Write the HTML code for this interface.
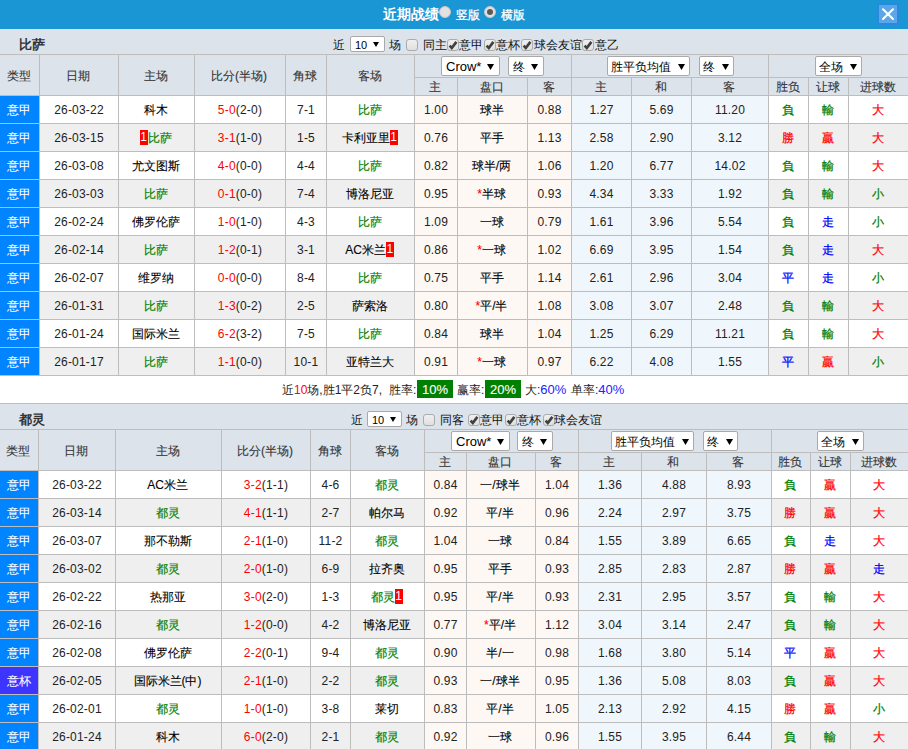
<!DOCTYPE html><html><head><meta charset="utf-8"><style>
html,body{margin:0;padding:0;}
body{width:908px;height:749px;overflow:hidden;position:relative;background:#fff;font-family:"Liberation Sans",sans-serif;font-size:12px;color:#222;}
.t{position:absolute;white-space:nowrap;}
.c{position:absolute;white-space:nowrap;text-align:center;overflow:visible;}
.c{-webkit-text-stroke:0.1px;}
.n{letter-spacing:0.2px;-webkit-text-stroke:0;color:#222;}
.rc{display:inline-block;background:#f00;color:#fff;width:8px;height:15px;line-height:15px;text-align:center;vertical-align:middle;font-size:12px;position:relative;top:-1px;-webkit-text-stroke:0;}
.sel{position:absolute;background:#fff;border:1px solid #a9a9a9;border-radius:2px;box-sizing:border-box;}
.cb{position:absolute;width:12px;height:12px;box-sizing:border-box;border:1px solid #ababab;border-radius:3px;background:linear-gradient(#efefef,#e0e0e0);}
</style></head><body>
<div style="position:absolute;left:0px;top:0px;width:908px;height:29px;background:#1a96d5;"></div>
<div class="t" style="left:383px;top:5px;font-size:14px;font-weight:bold;color:#fff;line-height:18px">近期战绩</div>
<div style="position:absolute;left:439px;top:6px;width:12px;height:12px;border-radius:50%;background:#e2e2e2;box-sizing:border-box;border:1px solid #c4c4c4"></div>
<div class="t" style="left:456px;top:7px;font-size:12px;color:#fff;line-height:16px;-webkit-text-stroke:0.3px #fff">竖版</div>
<div style="position:absolute;left:484px;top:6px;width:12px;height:12px;border-radius:50%;background:#e2e2e2;box-sizing:border-box;border:1px solid #c4c4c4"></div>
<div style="position:absolute;left:487px;top:9px;width:6px;height:6px;border-radius:50%;background:#5a5a5a"></div>
<div class="t" style="left:501px;top:7px;font-size:12px;color:#fff;line-height:16px;-webkit-text-stroke:0.3px #fff">横版</div>
<div style="position:absolute;left:877px;top:3px;width:22px;height:22px;background:#2a88e0;"></div>
<div style="position:absolute;left:879px;top:5px;width:18px;height:18px;background:#5aa6e6;"></div>
<svg style="position:absolute;left:879px;top:5px" width="18" height="18"><path d="M4 4.2 L14 14 M14 4.2 L4 14" stroke="#fff" stroke-width="2" stroke-linecap="round"/></svg>
<div style="position:absolute;left:0px;top:29px;width:908px;height:25px;background:#dce3eb;"></div>
<div class="t" style="left:19px;top:36px;font-size:13px;font-weight:bold;color:#333;line-height:18px">比萨</div>
<div style="position:absolute;left:0px;top:54px;width:908px;height:41px;background:#dce3eb;"></div>
<div style="position:absolute;left:0px;top:54px;width:908px;height:1px;background:#bdbdbd;"></div>
<div style="position:absolute;left:414px;top:77px;width:494px;height:1px;background:#bdbdbd;"></div>
<div style="position:absolute;left:0px;top:95px;width:908px;height:1px;background:#bdbdbd;"></div>
<div style="position:absolute;left:0px;top:96px;width:908px;height:27px;background:#ffffff;"></div>
<div style="position:absolute;left:415px;top:96px;width:156px;height:27px;background:#fdf8f4;"></div>
<div style="position:absolute;left:572px;top:96px;width:196px;height:27px;background:#f0f7fc;"></div>
<div style="position:absolute;left:0px;top:96px;width:39px;height:27px;background:#0084ff;"></div>
<div style="position:absolute;left:0px;top:123px;width:908px;height:1px;background:#bdbdbd;"></div>
<div style="position:absolute;left:0px;top:124px;width:908px;height:27px;background:#efefef;"></div>
<div style="position:absolute;left:415px;top:124px;width:156px;height:27px;background:#fdf8f4;"></div>
<div style="position:absolute;left:572px;top:124px;width:196px;height:27px;background:#f0f7fc;"></div>
<div style="position:absolute;left:0px;top:124px;width:39px;height:27px;background:#0084ff;"></div>
<div style="position:absolute;left:0px;top:151px;width:908px;height:1px;background:#bdbdbd;"></div>
<div style="position:absolute;left:0px;top:152px;width:908px;height:27px;background:#ffffff;"></div>
<div style="position:absolute;left:415px;top:152px;width:156px;height:27px;background:#fdf8f4;"></div>
<div style="position:absolute;left:572px;top:152px;width:196px;height:27px;background:#f0f7fc;"></div>
<div style="position:absolute;left:0px;top:152px;width:39px;height:27px;background:#0084ff;"></div>
<div style="position:absolute;left:0px;top:179px;width:908px;height:1px;background:#bdbdbd;"></div>
<div style="position:absolute;left:0px;top:180px;width:908px;height:27px;background:#efefef;"></div>
<div style="position:absolute;left:415px;top:180px;width:156px;height:27px;background:#fdf8f4;"></div>
<div style="position:absolute;left:572px;top:180px;width:196px;height:27px;background:#f0f7fc;"></div>
<div style="position:absolute;left:0px;top:180px;width:39px;height:27px;background:#0084ff;"></div>
<div style="position:absolute;left:0px;top:207px;width:908px;height:1px;background:#bdbdbd;"></div>
<div style="position:absolute;left:0px;top:208px;width:908px;height:27px;background:#ffffff;"></div>
<div style="position:absolute;left:415px;top:208px;width:156px;height:27px;background:#fdf8f4;"></div>
<div style="position:absolute;left:572px;top:208px;width:196px;height:27px;background:#f0f7fc;"></div>
<div style="position:absolute;left:0px;top:208px;width:39px;height:27px;background:#0084ff;"></div>
<div style="position:absolute;left:0px;top:235px;width:908px;height:1px;background:#bdbdbd;"></div>
<div style="position:absolute;left:0px;top:236px;width:908px;height:27px;background:#efefef;"></div>
<div style="position:absolute;left:415px;top:236px;width:156px;height:27px;background:#fdf8f4;"></div>
<div style="position:absolute;left:572px;top:236px;width:196px;height:27px;background:#f0f7fc;"></div>
<div style="position:absolute;left:0px;top:236px;width:39px;height:27px;background:#0084ff;"></div>
<div style="position:absolute;left:0px;top:263px;width:908px;height:1px;background:#bdbdbd;"></div>
<div style="position:absolute;left:0px;top:264px;width:908px;height:27px;background:#ffffff;"></div>
<div style="position:absolute;left:415px;top:264px;width:156px;height:27px;background:#fdf8f4;"></div>
<div style="position:absolute;left:572px;top:264px;width:196px;height:27px;background:#f0f7fc;"></div>
<div style="position:absolute;left:0px;top:264px;width:39px;height:27px;background:#0084ff;"></div>
<div style="position:absolute;left:0px;top:291px;width:908px;height:1px;background:#bdbdbd;"></div>
<div style="position:absolute;left:0px;top:292px;width:908px;height:27px;background:#efefef;"></div>
<div style="position:absolute;left:415px;top:292px;width:156px;height:27px;background:#fdf8f4;"></div>
<div style="position:absolute;left:572px;top:292px;width:196px;height:27px;background:#f0f7fc;"></div>
<div style="position:absolute;left:0px;top:292px;width:39px;height:27px;background:#0084ff;"></div>
<div style="position:absolute;left:0px;top:319px;width:908px;height:1px;background:#bdbdbd;"></div>
<div style="position:absolute;left:0px;top:320px;width:908px;height:27px;background:#ffffff;"></div>
<div style="position:absolute;left:415px;top:320px;width:156px;height:27px;background:#fdf8f4;"></div>
<div style="position:absolute;left:572px;top:320px;width:196px;height:27px;background:#f0f7fc;"></div>
<div style="position:absolute;left:0px;top:320px;width:39px;height:27px;background:#0084ff;"></div>
<div style="position:absolute;left:0px;top:347px;width:908px;height:1px;background:#bdbdbd;"></div>
<div style="position:absolute;left:0px;top:348px;width:908px;height:27px;background:#efefef;"></div>
<div style="position:absolute;left:415px;top:348px;width:156px;height:27px;background:#fdf8f4;"></div>
<div style="position:absolute;left:572px;top:348px;width:196px;height:27px;background:#f0f7fc;"></div>
<div style="position:absolute;left:0px;top:348px;width:39px;height:27px;background:#0084ff;"></div>
<div style="position:absolute;left:0px;top:375px;width:908px;height:1px;background:#bdbdbd;"></div>
<div style="position:absolute;left:39px;top:54px;width:1px;height:322px;background:#bdbdbd;"></div>
<div style="position:absolute;left:118px;top:54px;width:1px;height:322px;background:#bdbdbd;"></div>
<div style="position:absolute;left:194px;top:54px;width:1px;height:322px;background:#bdbdbd;"></div>
<div style="position:absolute;left:285px;top:54px;width:1px;height:322px;background:#bdbdbd;"></div>
<div style="position:absolute;left:326px;top:54px;width:1px;height:322px;background:#bdbdbd;"></div>
<div style="position:absolute;left:414px;top:54px;width:1px;height:322px;background:#bdbdbd;"></div>
<div style="position:absolute;left:457px;top:77px;width:1px;height:299px;background:#bdbdbd;"></div>
<div style="position:absolute;left:527px;top:77px;width:1px;height:299px;background:#bdbdbd;"></div>
<div style="position:absolute;left:571px;top:54px;width:1px;height:322px;background:#bdbdbd;"></div>
<div style="position:absolute;left:631px;top:77px;width:1px;height:299px;background:#bdbdbd;"></div>
<div style="position:absolute;left:691px;top:77px;width:1px;height:299px;background:#bdbdbd;"></div>
<div style="position:absolute;left:768px;top:54px;width:1px;height:322px;background:#bdbdbd;"></div>
<div style="position:absolute;left:808px;top:77px;width:1px;height:299px;background:#bdbdbd;"></div>
<div style="position:absolute;left:848px;top:77px;width:1px;height:299px;background:#bdbdbd;"></div>
<div class="c" style="left:-1px;top:56px;width:39px;height:40px;line-height:40px;color:#333">类型</div>
<div class="c" style="left:39px;top:56px;width:78px;height:40px;line-height:40px;color:#333">日期</div>
<div class="c" style="left:118px;top:56px;width:75px;height:40px;line-height:40px;color:#333">主场</div>
<div class="c" style="left:194px;top:56px;width:90px;height:40px;line-height:40px;color:#333">比分(半场)</div>
<div class="c" style="left:285px;top:56px;width:40px;height:40px;line-height:40px;color:#333">角球</div>
<div class="c" style="left:326px;top:56px;width:87px;height:40px;line-height:40px;color:#333">客场</div>
<div class="c" style="left:414px;top:79px;width:42px;height:17px;line-height:17px;color:#333">主</div>
<div class="c" style="left:457px;top:79px;width:69px;height:17px;line-height:17px;color:#333">盘口</div>
<div class="c" style="left:527px;top:79px;width:43px;height:17px;line-height:17px;color:#333">客</div>
<div class="c" style="left:571px;top:79px;width:59px;height:17px;line-height:17px;color:#333">主</div>
<div class="c" style="left:631px;top:79px;width:59px;height:17px;line-height:17px;color:#333">和</div>
<div class="c" style="left:691px;top:79px;width:76px;height:17px;line-height:17px;color:#333">客</div>
<div class="c" style="left:768px;top:79px;width:39px;height:17px;line-height:17px;color:#333">胜负</div>
<div class="c" style="left:808px;top:79px;width:39px;height:17px;line-height:17px;color:#333">让球</div>
<div class="c" style="left:848px;top:79px;width:59px;height:17px;line-height:17px;color:#333">进球数</div>
<div class="c" style="left:-1px;top:97px;width:39px;height:27px;line-height:27px;color:#fff">意甲</div>
<div class="c" style="left:40px;top:97px;width:78px;height:27px;line-height:27px;color:#000"><span class="n">26-03-22</span></div>
<div class="c" style="left:118px;top:97px;width:75px;height:27px;line-height:27px;color:#000">科木</div>
<div class="c" style="left:195px;top:97px;width:90px;height:27px;line-height:27px;color:#000"><span class="n"><span style="color:#ff0000">5-0</span>(2-0)</span></div>
<div class="c" style="left:286px;top:97px;width:40px;height:27px;line-height:27px;color:#000"><span class="n">7-1</span></div>
<div class="c" style="left:326px;top:97px;width:87px;height:27px;line-height:27px;color:#000"><span style="color:#008000;-webkit-text-stroke:0.15px #008000">比萨</span></div>
<div class="c" style="left:415px;top:97px;width:42px;height:27px;line-height:27px;color:#000"><span class="n">1.00</span></div>
<div class="c" style="left:457px;top:97px;width:69px;height:27px;line-height:27px;color:#000">球半</div>
<div class="c" style="left:528px;top:97px;width:43px;height:27px;line-height:27px;color:#000"><span class="n">0.88</span></div>
<div class="c" style="left:572px;top:97px;width:59px;height:27px;line-height:27px;color:#000"><span class="n">1.27</span></div>
<div class="c" style="left:632px;top:97px;width:59px;height:27px;line-height:27px;color:#000"><span class="n">5.69</span></div>
<div class="c" style="left:692px;top:97px;width:76px;height:27px;line-height:27px;color:#000"><span class="n">11.20</span></div>
<div class="c" style="left:768px;top:97px;width:39px;height:27px;line-height:27px;color:#000"><span style="color:#008000;-webkit-text-stroke:0.25px #008000">負</span></div>
<div class="c" style="left:808px;top:97px;width:39px;height:27px;line-height:27px;color:#000"><span style="color:#008000;-webkit-text-stroke:0.25px #008000">輸</span></div>
<div class="c" style="left:848px;top:97px;width:59px;height:27px;line-height:27px;color:#000"><span style="color:#ff0000;-webkit-text-stroke:0.25px #ff0000">大</span></div>
<div class="c" style="left:-1px;top:125px;width:39px;height:27px;line-height:27px;color:#fff">意甲</div>
<div class="c" style="left:40px;top:125px;width:78px;height:27px;line-height:27px;color:#000"><span class="n">26-03-15</span></div>
<div class="c" style="left:118px;top:125px;width:75px;height:27px;line-height:27px;color:#000"><span class="rc">1</span><span style="color:#008000;-webkit-text-stroke:0.15px #008000">比萨</span></div>
<div class="c" style="left:195px;top:125px;width:90px;height:27px;line-height:27px;color:#000"><span class="n"><span style="color:#ff0000">3-1</span>(1-0)</span></div>
<div class="c" style="left:286px;top:125px;width:40px;height:27px;line-height:27px;color:#000"><span class="n">1-5</span></div>
<div class="c" style="left:326px;top:125px;width:87px;height:27px;line-height:27px;color:#000">卡利亚里<span class="rc">1</span></div>
<div class="c" style="left:415px;top:125px;width:42px;height:27px;line-height:27px;color:#000"><span class="n">0.76</span></div>
<div class="c" style="left:457px;top:125px;width:69px;height:27px;line-height:27px;color:#000">平手</div>
<div class="c" style="left:528px;top:125px;width:43px;height:27px;line-height:27px;color:#000"><span class="n">1.13</span></div>
<div class="c" style="left:572px;top:125px;width:59px;height:27px;line-height:27px;color:#000"><span class="n">2.58</span></div>
<div class="c" style="left:632px;top:125px;width:59px;height:27px;line-height:27px;color:#000"><span class="n">2.90</span></div>
<div class="c" style="left:692px;top:125px;width:76px;height:27px;line-height:27px;color:#000"><span class="n">3.12</span></div>
<div class="c" style="left:768px;top:125px;width:39px;height:27px;line-height:27px;color:#000"><span style="color:#ff0000;-webkit-text-stroke:0.25px #ff0000">勝</span></div>
<div class="c" style="left:808px;top:125px;width:39px;height:27px;line-height:27px;color:#000"><span style="color:#ff0000;-webkit-text-stroke:0.25px #ff0000">贏</span></div>
<div class="c" style="left:848px;top:125px;width:59px;height:27px;line-height:27px;color:#000"><span style="color:#ff0000;-webkit-text-stroke:0.25px #ff0000">大</span></div>
<div class="c" style="left:-1px;top:153px;width:39px;height:27px;line-height:27px;color:#fff">意甲</div>
<div class="c" style="left:40px;top:153px;width:78px;height:27px;line-height:27px;color:#000"><span class="n">26-03-08</span></div>
<div class="c" style="left:118px;top:153px;width:75px;height:27px;line-height:27px;color:#000">尤文图斯</div>
<div class="c" style="left:195px;top:153px;width:90px;height:27px;line-height:27px;color:#000"><span class="n"><span style="color:#ff0000">4-0</span>(0-0)</span></div>
<div class="c" style="left:286px;top:153px;width:40px;height:27px;line-height:27px;color:#000"><span class="n">4-4</span></div>
<div class="c" style="left:326px;top:153px;width:87px;height:27px;line-height:27px;color:#000"><span style="color:#008000;-webkit-text-stroke:0.15px #008000">比萨</span></div>
<div class="c" style="left:415px;top:153px;width:42px;height:27px;line-height:27px;color:#000"><span class="n">0.82</span></div>
<div class="c" style="left:457px;top:153px;width:69px;height:27px;line-height:27px;color:#000">球半/两</div>
<div class="c" style="left:528px;top:153px;width:43px;height:27px;line-height:27px;color:#000"><span class="n">1.06</span></div>
<div class="c" style="left:572px;top:153px;width:59px;height:27px;line-height:27px;color:#000"><span class="n">1.20</span></div>
<div class="c" style="left:632px;top:153px;width:59px;height:27px;line-height:27px;color:#000"><span class="n">6.77</span></div>
<div class="c" style="left:692px;top:153px;width:76px;height:27px;line-height:27px;color:#000"><span class="n">14.02</span></div>
<div class="c" style="left:768px;top:153px;width:39px;height:27px;line-height:27px;color:#000"><span style="color:#008000;-webkit-text-stroke:0.25px #008000">負</span></div>
<div class="c" style="left:808px;top:153px;width:39px;height:27px;line-height:27px;color:#000"><span style="color:#008000;-webkit-text-stroke:0.25px #008000">輸</span></div>
<div class="c" style="left:848px;top:153px;width:59px;height:27px;line-height:27px;color:#000"><span style="color:#ff0000;-webkit-text-stroke:0.25px #ff0000">大</span></div>
<div class="c" style="left:-1px;top:181px;width:39px;height:27px;line-height:27px;color:#fff">意甲</div>
<div class="c" style="left:40px;top:181px;width:78px;height:27px;line-height:27px;color:#000"><span class="n">26-03-03</span></div>
<div class="c" style="left:118px;top:181px;width:75px;height:27px;line-height:27px;color:#000"><span style="color:#008000;-webkit-text-stroke:0.15px #008000">比萨</span></div>
<div class="c" style="left:195px;top:181px;width:90px;height:27px;line-height:27px;color:#000"><span class="n"><span style="color:#ff0000">0-1</span>(0-0)</span></div>
<div class="c" style="left:286px;top:181px;width:40px;height:27px;line-height:27px;color:#000"><span class="n">7-4</span></div>
<div class="c" style="left:326px;top:181px;width:87px;height:27px;line-height:27px;color:#000">博洛尼亚</div>
<div class="c" style="left:415px;top:181px;width:42px;height:27px;line-height:27px;color:#000"><span class="n">0.95</span></div>
<div class="c" style="left:457px;top:181px;width:69px;height:27px;line-height:27px;color:#000"><span style="color:#ff0000">*</span>半球</div>
<div class="c" style="left:528px;top:181px;width:43px;height:27px;line-height:27px;color:#000"><span class="n">0.93</span></div>
<div class="c" style="left:572px;top:181px;width:59px;height:27px;line-height:27px;color:#000"><span class="n">4.34</span></div>
<div class="c" style="left:632px;top:181px;width:59px;height:27px;line-height:27px;color:#000"><span class="n">3.33</span></div>
<div class="c" style="left:692px;top:181px;width:76px;height:27px;line-height:27px;color:#000"><span class="n">1.92</span></div>
<div class="c" style="left:768px;top:181px;width:39px;height:27px;line-height:27px;color:#000"><span style="color:#008000;-webkit-text-stroke:0.25px #008000">負</span></div>
<div class="c" style="left:808px;top:181px;width:39px;height:27px;line-height:27px;color:#000"><span style="color:#008000;-webkit-text-stroke:0.25px #008000">輸</span></div>
<div class="c" style="left:848px;top:181px;width:59px;height:27px;line-height:27px;color:#000"><span style="color:#008000;-webkit-text-stroke:0.25px #008000">小</span></div>
<div class="c" style="left:-1px;top:209px;width:39px;height:27px;line-height:27px;color:#fff">意甲</div>
<div class="c" style="left:40px;top:209px;width:78px;height:27px;line-height:27px;color:#000"><span class="n">26-02-24</span></div>
<div class="c" style="left:118px;top:209px;width:75px;height:27px;line-height:27px;color:#000">佛罗伦萨</div>
<div class="c" style="left:195px;top:209px;width:90px;height:27px;line-height:27px;color:#000"><span class="n"><span style="color:#ff0000">1-0</span>(1-0)</span></div>
<div class="c" style="left:286px;top:209px;width:40px;height:27px;line-height:27px;color:#000"><span class="n">4-3</span></div>
<div class="c" style="left:326px;top:209px;width:87px;height:27px;line-height:27px;color:#000"><span style="color:#008000;-webkit-text-stroke:0.15px #008000">比萨</span></div>
<div class="c" style="left:415px;top:209px;width:42px;height:27px;line-height:27px;color:#000"><span class="n">1.09</span></div>
<div class="c" style="left:457px;top:209px;width:69px;height:27px;line-height:27px;color:#000">一球</div>
<div class="c" style="left:528px;top:209px;width:43px;height:27px;line-height:27px;color:#000"><span class="n">0.79</span></div>
<div class="c" style="left:572px;top:209px;width:59px;height:27px;line-height:27px;color:#000"><span class="n">1.61</span></div>
<div class="c" style="left:632px;top:209px;width:59px;height:27px;line-height:27px;color:#000"><span class="n">3.96</span></div>
<div class="c" style="left:692px;top:209px;width:76px;height:27px;line-height:27px;color:#000"><span class="n">5.54</span></div>
<div class="c" style="left:768px;top:209px;width:39px;height:27px;line-height:27px;color:#000"><span style="color:#008000;-webkit-text-stroke:0.25px #008000">負</span></div>
<div class="c" style="left:808px;top:209px;width:39px;height:27px;line-height:27px;color:#000"><span style="color:#0000ff;-webkit-text-stroke:0.25px #0000ff">走</span></div>
<div class="c" style="left:848px;top:209px;width:59px;height:27px;line-height:27px;color:#000"><span style="color:#008000;-webkit-text-stroke:0.25px #008000">小</span></div>
<div class="c" style="left:-1px;top:237px;width:39px;height:27px;line-height:27px;color:#fff">意甲</div>
<div class="c" style="left:40px;top:237px;width:78px;height:27px;line-height:27px;color:#000"><span class="n">26-02-14</span></div>
<div class="c" style="left:118px;top:237px;width:75px;height:27px;line-height:27px;color:#000"><span style="color:#008000;-webkit-text-stroke:0.15px #008000">比萨</span></div>
<div class="c" style="left:195px;top:237px;width:90px;height:27px;line-height:27px;color:#000"><span class="n"><span style="color:#ff0000">1-2</span>(0-1)</span></div>
<div class="c" style="left:286px;top:237px;width:40px;height:27px;line-height:27px;color:#000"><span class="n">3-1</span></div>
<div class="c" style="left:326px;top:237px;width:87px;height:27px;line-height:27px;color:#000">AC米兰<span class="rc">1</span></div>
<div class="c" style="left:415px;top:237px;width:42px;height:27px;line-height:27px;color:#000"><span class="n">0.86</span></div>
<div class="c" style="left:457px;top:237px;width:69px;height:27px;line-height:27px;color:#000"><span style="color:#ff0000">*</span>一球</div>
<div class="c" style="left:528px;top:237px;width:43px;height:27px;line-height:27px;color:#000"><span class="n">1.02</span></div>
<div class="c" style="left:572px;top:237px;width:59px;height:27px;line-height:27px;color:#000"><span class="n">6.69</span></div>
<div class="c" style="left:632px;top:237px;width:59px;height:27px;line-height:27px;color:#000"><span class="n">3.95</span></div>
<div class="c" style="left:692px;top:237px;width:76px;height:27px;line-height:27px;color:#000"><span class="n">1.54</span></div>
<div class="c" style="left:768px;top:237px;width:39px;height:27px;line-height:27px;color:#000"><span style="color:#008000;-webkit-text-stroke:0.25px #008000">負</span></div>
<div class="c" style="left:808px;top:237px;width:39px;height:27px;line-height:27px;color:#000"><span style="color:#0000ff;-webkit-text-stroke:0.25px #0000ff">走</span></div>
<div class="c" style="left:848px;top:237px;width:59px;height:27px;line-height:27px;color:#000"><span style="color:#ff0000;-webkit-text-stroke:0.25px #ff0000">大</span></div>
<div class="c" style="left:-1px;top:265px;width:39px;height:27px;line-height:27px;color:#fff">意甲</div>
<div class="c" style="left:40px;top:265px;width:78px;height:27px;line-height:27px;color:#000"><span class="n">26-02-07</span></div>
<div class="c" style="left:118px;top:265px;width:75px;height:27px;line-height:27px;color:#000">维罗纳</div>
<div class="c" style="left:195px;top:265px;width:90px;height:27px;line-height:27px;color:#000"><span class="n"><span style="color:#ff0000">0-0</span>(0-0)</span></div>
<div class="c" style="left:286px;top:265px;width:40px;height:27px;line-height:27px;color:#000"><span class="n">8-4</span></div>
<div class="c" style="left:326px;top:265px;width:87px;height:27px;line-height:27px;color:#000"><span style="color:#008000;-webkit-text-stroke:0.15px #008000">比萨</span></div>
<div class="c" style="left:415px;top:265px;width:42px;height:27px;line-height:27px;color:#000"><span class="n">0.75</span></div>
<div class="c" style="left:457px;top:265px;width:69px;height:27px;line-height:27px;color:#000">平手</div>
<div class="c" style="left:528px;top:265px;width:43px;height:27px;line-height:27px;color:#000"><span class="n">1.14</span></div>
<div class="c" style="left:572px;top:265px;width:59px;height:27px;line-height:27px;color:#000"><span class="n">2.61</span></div>
<div class="c" style="left:632px;top:265px;width:59px;height:27px;line-height:27px;color:#000"><span class="n">2.96</span></div>
<div class="c" style="left:692px;top:265px;width:76px;height:27px;line-height:27px;color:#000"><span class="n">3.04</span></div>
<div class="c" style="left:768px;top:265px;width:39px;height:27px;line-height:27px;color:#000"><span style="color:#0000ff;-webkit-text-stroke:0.25px #0000ff">平</span></div>
<div class="c" style="left:808px;top:265px;width:39px;height:27px;line-height:27px;color:#000"><span style="color:#0000ff;-webkit-text-stroke:0.25px #0000ff">走</span></div>
<div class="c" style="left:848px;top:265px;width:59px;height:27px;line-height:27px;color:#000"><span style="color:#008000;-webkit-text-stroke:0.25px #008000">小</span></div>
<div class="c" style="left:-1px;top:293px;width:39px;height:27px;line-height:27px;color:#fff">意甲</div>
<div class="c" style="left:40px;top:293px;width:78px;height:27px;line-height:27px;color:#000"><span class="n">26-01-31</span></div>
<div class="c" style="left:118px;top:293px;width:75px;height:27px;line-height:27px;color:#000"><span style="color:#008000;-webkit-text-stroke:0.15px #008000">比萨</span></div>
<div class="c" style="left:195px;top:293px;width:90px;height:27px;line-height:27px;color:#000"><span class="n"><span style="color:#ff0000">1-3</span>(0-2)</span></div>
<div class="c" style="left:286px;top:293px;width:40px;height:27px;line-height:27px;color:#000"><span class="n">2-5</span></div>
<div class="c" style="left:326px;top:293px;width:87px;height:27px;line-height:27px;color:#000">萨索洛</div>
<div class="c" style="left:415px;top:293px;width:42px;height:27px;line-height:27px;color:#000"><span class="n">0.80</span></div>
<div class="c" style="left:457px;top:293px;width:69px;height:27px;line-height:27px;color:#000"><span style="color:#ff0000">*</span>平/半</div>
<div class="c" style="left:528px;top:293px;width:43px;height:27px;line-height:27px;color:#000"><span class="n">1.08</span></div>
<div class="c" style="left:572px;top:293px;width:59px;height:27px;line-height:27px;color:#000"><span class="n">3.08</span></div>
<div class="c" style="left:632px;top:293px;width:59px;height:27px;line-height:27px;color:#000"><span class="n">3.07</span></div>
<div class="c" style="left:692px;top:293px;width:76px;height:27px;line-height:27px;color:#000"><span class="n">2.48</span></div>
<div class="c" style="left:768px;top:293px;width:39px;height:27px;line-height:27px;color:#000"><span style="color:#008000;-webkit-text-stroke:0.25px #008000">負</span></div>
<div class="c" style="left:808px;top:293px;width:39px;height:27px;line-height:27px;color:#000"><span style="color:#008000;-webkit-text-stroke:0.25px #008000">輸</span></div>
<div class="c" style="left:848px;top:293px;width:59px;height:27px;line-height:27px;color:#000"><span style="color:#ff0000;-webkit-text-stroke:0.25px #ff0000">大</span></div>
<div class="c" style="left:-1px;top:321px;width:39px;height:27px;line-height:27px;color:#fff">意甲</div>
<div class="c" style="left:40px;top:321px;width:78px;height:27px;line-height:27px;color:#000"><span class="n">26-01-24</span></div>
<div class="c" style="left:118px;top:321px;width:75px;height:27px;line-height:27px;color:#000">国际米兰</div>
<div class="c" style="left:195px;top:321px;width:90px;height:27px;line-height:27px;color:#000"><span class="n"><span style="color:#ff0000">6-2</span>(3-2)</span></div>
<div class="c" style="left:286px;top:321px;width:40px;height:27px;line-height:27px;color:#000"><span class="n">7-5</span></div>
<div class="c" style="left:326px;top:321px;width:87px;height:27px;line-height:27px;color:#000"><span style="color:#008000;-webkit-text-stroke:0.15px #008000">比萨</span></div>
<div class="c" style="left:415px;top:321px;width:42px;height:27px;line-height:27px;color:#000"><span class="n">0.84</span></div>
<div class="c" style="left:457px;top:321px;width:69px;height:27px;line-height:27px;color:#000">球半</div>
<div class="c" style="left:528px;top:321px;width:43px;height:27px;line-height:27px;color:#000"><span class="n">1.04</span></div>
<div class="c" style="left:572px;top:321px;width:59px;height:27px;line-height:27px;color:#000"><span class="n">1.25</span></div>
<div class="c" style="left:632px;top:321px;width:59px;height:27px;line-height:27px;color:#000"><span class="n">6.29</span></div>
<div class="c" style="left:692px;top:321px;width:76px;height:27px;line-height:27px;color:#000"><span class="n">11.21</span></div>
<div class="c" style="left:768px;top:321px;width:39px;height:27px;line-height:27px;color:#000"><span style="color:#008000;-webkit-text-stroke:0.25px #008000">負</span></div>
<div class="c" style="left:808px;top:321px;width:39px;height:27px;line-height:27px;color:#000"><span style="color:#008000;-webkit-text-stroke:0.25px #008000">輸</span></div>
<div class="c" style="left:848px;top:321px;width:59px;height:27px;line-height:27px;color:#000"><span style="color:#ff0000;-webkit-text-stroke:0.25px #ff0000">大</span></div>
<div class="c" style="left:-1px;top:349px;width:39px;height:27px;line-height:27px;color:#fff">意甲</div>
<div class="c" style="left:40px;top:349px;width:78px;height:27px;line-height:27px;color:#000"><span class="n">26-01-17</span></div>
<div class="c" style="left:118px;top:349px;width:75px;height:27px;line-height:27px;color:#000"><span style="color:#008000;-webkit-text-stroke:0.15px #008000">比萨</span></div>
<div class="c" style="left:195px;top:349px;width:90px;height:27px;line-height:27px;color:#000"><span class="n"><span style="color:#ff0000">1-1</span>(0-0)</span></div>
<div class="c" style="left:286px;top:349px;width:40px;height:27px;line-height:27px;color:#000"><span class="n">10-1</span></div>
<div class="c" style="left:326px;top:349px;width:87px;height:27px;line-height:27px;color:#000">亚特兰大</div>
<div class="c" style="left:415px;top:349px;width:42px;height:27px;line-height:27px;color:#000"><span class="n">0.91</span></div>
<div class="c" style="left:457px;top:349px;width:69px;height:27px;line-height:27px;color:#000"><span style="color:#ff0000">*</span>一球</div>
<div class="c" style="left:528px;top:349px;width:43px;height:27px;line-height:27px;color:#000"><span class="n">0.97</span></div>
<div class="c" style="left:572px;top:349px;width:59px;height:27px;line-height:27px;color:#000"><span class="n">6.22</span></div>
<div class="c" style="left:632px;top:349px;width:59px;height:27px;line-height:27px;color:#000"><span class="n">4.08</span></div>
<div class="c" style="left:692px;top:349px;width:76px;height:27px;line-height:27px;color:#000"><span class="n">1.55</span></div>
<div class="c" style="left:768px;top:349px;width:39px;height:27px;line-height:27px;color:#000"><span style="color:#0000ff;-webkit-text-stroke:0.25px #0000ff">平</span></div>
<div class="c" style="left:808px;top:349px;width:39px;height:27px;line-height:27px;color:#000"><span style="color:#ff0000;-webkit-text-stroke:0.25px #ff0000">贏</span></div>
<div class="c" style="left:848px;top:349px;width:59px;height:27px;line-height:27px;color:#000"><span style="color:#008000;-webkit-text-stroke:0.25px #008000">小</span></div>
<div class="t" style="left:333px;top:38px;line-height:14px;color:#111">近</div>
<div class="sel" style="left:350px;top:36px;width:35px;height:16px"></div>
<div class="t" style="left:355px;top:38px;line-height:14px;color:#000;font-size:11px"><span class="tah">10</span></div>
<svg style="position:absolute;left:373px;top:42px" width="6" height="5"><path d="M0 0 L6 0 L3 5 Z" fill="#000"/></svg>
<div class="t" style="left:389px;top:38px;line-height:14px;color:#111">场</div>
<div class="cb" style="left:406px;top:39px"></div>
<div class="t" style="left:423px;top:38px;line-height:14px;color:#111">同主</div>
<div class="cb" style="left:447px;top:39px"><svg width="12" height="12" style="position:absolute;left:-1px;top:-1px"><path d="M2.6 6.6 L4.8 9 L9.4 2.9" fill="none" stroke="#404040" stroke-width="2.7" stroke-linejoin="miter" stroke-linecap="butt"/></svg></div>
<div class="t" style="left:459px;top:38px;line-height:14px;color:#111">意甲</div>
<div class="cb" style="left:484px;top:39px"><svg width="12" height="12" style="position:absolute;left:-1px;top:-1px"><path d="M2.6 6.6 L4.8 9 L9.4 2.9" fill="none" stroke="#404040" stroke-width="2.7" stroke-linejoin="miter" stroke-linecap="butt"/></svg></div>
<div class="t" style="left:496px;top:38px;line-height:14px;color:#111">意杯</div>
<div class="cb" style="left:521px;top:39px"><svg width="12" height="12" style="position:absolute;left:-1px;top:-1px"><path d="M2.6 6.6 L4.8 9 L9.4 2.9" fill="none" stroke="#404040" stroke-width="2.7" stroke-linejoin="miter" stroke-linecap="butt"/></svg></div>
<div class="t" style="left:534px;top:38px;line-height:14px;color:#111">球会友谊</div>
<div class="cb" style="left:582px;top:39px"><svg width="12" height="12" style="position:absolute;left:-1px;top:-1px"><path d="M2.6 6.6 L4.8 9 L9.4 2.9" fill="none" stroke="#404040" stroke-width="2.7" stroke-linejoin="miter" stroke-linecap="butt"/></svg></div>
<div class="t" style="left:595px;top:38px;line-height:14px;color:#111">意乙</div>
<div class="sel" style="left:441px;top:56px;width:59px;height:20px"></div>
<div class="t" style="left:446px;top:58px;line-height:18px;color:#000;font-size:13px">Crow*</div>
<svg style="position:absolute;left:487px;top:64px" width="7" height="6"><path d="M0 0 L7 0 L3.5 6 Z" fill="#000"/></svg>
<div class="sel" style="left:508px;top:56px;width:36px;height:20px"></div>
<div class="t" style="left:513px;top:58px;line-height:18px;color:#000;font-size:12px">终</div>
<svg style="position:absolute;left:531px;top:64px" width="7" height="6"><path d="M0 0 L7 0 L3.5 6 Z" fill="#000"/></svg>
<div class="sel" style="left:607px;top:56px;width:83px;height:20px"></div>
<div class="t" style="left:611px;top:58px;line-height:18px;color:#000;font-size:12px">胜平负均值</div>
<svg style="position:absolute;left:678px;top:64px" width="7" height="6"><path d="M0 0 L7 0 L3.5 6 Z" fill="#000"/></svg>
<div class="sel" style="left:699px;top:56px;width:35px;height:20px"></div>
<div class="t" style="left:703px;top:58px;line-height:18px;color:#000;font-size:12px">终</div>
<svg style="position:absolute;left:722px;top:64px" width="7" height="6"><path d="M0 0 L7 0 L3.5 6 Z" fill="#000"/></svg>
<div class="sel" style="left:815px;top:56px;width:47px;height:20px"></div>
<div class="t" style="left:819px;top:58px;line-height:18px;color:#000;font-size:12px">全场</div>
<svg style="position:absolute;left:850px;top:64px" width="7" height="6"><path d="M0 0 L7 0 L3.5 6 Z" fill="#000"/></svg>
<div class="t" style="left:282px;top:382px;line-height:16px">近<span style="color:#f00">10</span>场,胜1平2负7,</div>
<div class="t" style="left:389px;top:382px;line-height:16px">胜率</div>
<div class="t" style="left:413px;top:382px;line-height:16px">:</div>
<div style="position:absolute;left:417px;top:380px;width:36px;height:18px;background:#008000;"></div>
<div class="t" style="left:417px;top:380px;"></div>
<div class="c" style="left:417px;top:381px;width:36px;height:18px;line-height:18px;color:#fff;font-size:13px">10%</div>
<div class="t" style="left:457px;top:382px;line-height:16px">赢率:</div>
<div style="position:absolute;left:485px;top:380px;width:36px;height:18px;background:#008000;"></div>
<div class="c" style="left:485px;top:381px;width:36px;height:18px;line-height:18px;color:#fff;font-size:13px">20%</div>
<div class="t" style="left:525px;top:382px;line-height:16px">大:<span style="color:#2222ff;font-size:13px">60%</span></div>
<div class="t" style="left:571px;top:382px;line-height:16px">单率:<span style="color:#2222ff;font-size:13px">40%</span></div>
<div style="position:absolute;left:0px;top:403px;width:908px;height:26px;background:#dce3eb;"></div>
<div style="position:absolute;left:0px;top:403px;width:908px;height:1px;background:#bdbdbd;"></div>
<div class="t" style="left:19px;top:411px;font-size:13px;font-weight:bold;color:#333;line-height:18px">都灵</div>
<div style="position:absolute;left:0px;top:429px;width:908px;height:41px;background:#dce3eb;"></div>
<div style="position:absolute;left:0px;top:429px;width:908px;height:1px;background:#bdbdbd;"></div>
<div style="position:absolute;left:424px;top:452px;width:484px;height:1px;background:#bdbdbd;"></div>
<div style="position:absolute;left:0px;top:470px;width:908px;height:1px;background:#bdbdbd;"></div>
<div style="position:absolute;left:0px;top:471px;width:908px;height:27px;background:#ffffff;"></div>
<div style="position:absolute;left:425px;top:471px;width:153px;height:27px;background:#fdf8f4;"></div>
<div style="position:absolute;left:579px;top:471px;width:192px;height:27px;background:#f0f7fc;"></div>
<div style="position:absolute;left:0px;top:471px;width:38px;height:27px;background:#0084ff;"></div>
<div style="position:absolute;left:0px;top:498px;width:908px;height:1px;background:#bdbdbd;"></div>
<div style="position:absolute;left:0px;top:499px;width:908px;height:27px;background:#efefef;"></div>
<div style="position:absolute;left:425px;top:499px;width:153px;height:27px;background:#fdf8f4;"></div>
<div style="position:absolute;left:579px;top:499px;width:192px;height:27px;background:#f0f7fc;"></div>
<div style="position:absolute;left:0px;top:499px;width:38px;height:27px;background:#0084ff;"></div>
<div style="position:absolute;left:0px;top:526px;width:908px;height:1px;background:#bdbdbd;"></div>
<div style="position:absolute;left:0px;top:527px;width:908px;height:27px;background:#ffffff;"></div>
<div style="position:absolute;left:425px;top:527px;width:153px;height:27px;background:#fdf8f4;"></div>
<div style="position:absolute;left:579px;top:527px;width:192px;height:27px;background:#f0f7fc;"></div>
<div style="position:absolute;left:0px;top:527px;width:38px;height:27px;background:#0084ff;"></div>
<div style="position:absolute;left:0px;top:554px;width:908px;height:1px;background:#bdbdbd;"></div>
<div style="position:absolute;left:0px;top:555px;width:908px;height:27px;background:#efefef;"></div>
<div style="position:absolute;left:425px;top:555px;width:153px;height:27px;background:#fdf8f4;"></div>
<div style="position:absolute;left:579px;top:555px;width:192px;height:27px;background:#f0f7fc;"></div>
<div style="position:absolute;left:0px;top:555px;width:38px;height:27px;background:#0084ff;"></div>
<div style="position:absolute;left:0px;top:582px;width:908px;height:1px;background:#bdbdbd;"></div>
<div style="position:absolute;left:0px;top:583px;width:908px;height:27px;background:#ffffff;"></div>
<div style="position:absolute;left:425px;top:583px;width:153px;height:27px;background:#fdf8f4;"></div>
<div style="position:absolute;left:579px;top:583px;width:192px;height:27px;background:#f0f7fc;"></div>
<div style="position:absolute;left:0px;top:583px;width:38px;height:27px;background:#0084ff;"></div>
<div style="position:absolute;left:0px;top:610px;width:908px;height:1px;background:#bdbdbd;"></div>
<div style="position:absolute;left:0px;top:611px;width:908px;height:27px;background:#efefef;"></div>
<div style="position:absolute;left:425px;top:611px;width:153px;height:27px;background:#fdf8f4;"></div>
<div style="position:absolute;left:579px;top:611px;width:192px;height:27px;background:#f0f7fc;"></div>
<div style="position:absolute;left:0px;top:611px;width:38px;height:27px;background:#0084ff;"></div>
<div style="position:absolute;left:0px;top:638px;width:908px;height:1px;background:#bdbdbd;"></div>
<div style="position:absolute;left:0px;top:639px;width:908px;height:27px;background:#ffffff;"></div>
<div style="position:absolute;left:425px;top:639px;width:153px;height:27px;background:#fdf8f4;"></div>
<div style="position:absolute;left:579px;top:639px;width:192px;height:27px;background:#f0f7fc;"></div>
<div style="position:absolute;left:0px;top:639px;width:38px;height:27px;background:#0084ff;"></div>
<div style="position:absolute;left:0px;top:666px;width:908px;height:1px;background:#bdbdbd;"></div>
<div style="position:absolute;left:0px;top:667px;width:908px;height:27px;background:#efefef;"></div>
<div style="position:absolute;left:425px;top:667px;width:153px;height:27px;background:#fdf8f4;"></div>
<div style="position:absolute;left:579px;top:667px;width:192px;height:27px;background:#f0f7fc;"></div>
<div style="position:absolute;left:0px;top:667px;width:38px;height:27px;background:#3d35ff;"></div>
<div style="position:absolute;left:0px;top:694px;width:908px;height:1px;background:#bdbdbd;"></div>
<div style="position:absolute;left:0px;top:695px;width:908px;height:27px;background:#ffffff;"></div>
<div style="position:absolute;left:425px;top:695px;width:153px;height:27px;background:#fdf8f4;"></div>
<div style="position:absolute;left:579px;top:695px;width:192px;height:27px;background:#f0f7fc;"></div>
<div style="position:absolute;left:0px;top:695px;width:38px;height:27px;background:#0084ff;"></div>
<div style="position:absolute;left:0px;top:722px;width:908px;height:1px;background:#bdbdbd;"></div>
<div style="position:absolute;left:0px;top:723px;width:908px;height:27px;background:#efefef;"></div>
<div style="position:absolute;left:425px;top:723px;width:153px;height:27px;background:#fdf8f4;"></div>
<div style="position:absolute;left:579px;top:723px;width:192px;height:27px;background:#f0f7fc;"></div>
<div style="position:absolute;left:0px;top:723px;width:38px;height:27px;background:#0084ff;"></div>
<div style="position:absolute;left:0px;top:750px;width:908px;height:1px;background:#bdbdbd;"></div>
<div style="position:absolute;left:38px;top:429px;width:1px;height:322px;background:#bdbdbd;"></div>
<div style="position:absolute;left:115px;top:429px;width:1px;height:322px;background:#bdbdbd;"></div>
<div style="position:absolute;left:221px;top:429px;width:1px;height:322px;background:#bdbdbd;"></div>
<div style="position:absolute;left:310px;top:429px;width:1px;height:322px;background:#bdbdbd;"></div>
<div style="position:absolute;left:350px;top:429px;width:1px;height:322px;background:#bdbdbd;"></div>
<div style="position:absolute;left:424px;top:429px;width:1px;height:322px;background:#bdbdbd;"></div>
<div style="position:absolute;left:466px;top:452px;width:1px;height:299px;background:#bdbdbd;"></div>
<div style="position:absolute;left:535px;top:452px;width:1px;height:299px;background:#bdbdbd;"></div>
<div style="position:absolute;left:578px;top:429px;width:1px;height:322px;background:#bdbdbd;"></div>
<div style="position:absolute;left:641px;top:452px;width:1px;height:299px;background:#bdbdbd;"></div>
<div style="position:absolute;left:706px;top:452px;width:1px;height:299px;background:#bdbdbd;"></div>
<div style="position:absolute;left:771px;top:429px;width:1px;height:322px;background:#bdbdbd;"></div>
<div style="position:absolute;left:810px;top:452px;width:1px;height:299px;background:#bdbdbd;"></div>
<div style="position:absolute;left:850px;top:452px;width:1px;height:299px;background:#bdbdbd;"></div>
<div class="c" style="left:-1px;top:431px;width:38px;height:40px;line-height:40px;color:#333">类型</div>
<div class="c" style="left:38px;top:431px;width:76px;height:40px;line-height:40px;color:#333">日期</div>
<div class="c" style="left:115px;top:431px;width:105px;height:40px;line-height:40px;color:#333">主场</div>
<div class="c" style="left:221px;top:431px;width:88px;height:40px;line-height:40px;color:#333">比分(半场)</div>
<div class="c" style="left:310px;top:431px;width:39px;height:40px;line-height:40px;color:#333">角球</div>
<div class="c" style="left:350px;top:431px;width:73px;height:40px;line-height:40px;color:#333">客场</div>
<div class="c" style="left:424px;top:454px;width:41px;height:17px;line-height:17px;color:#333">主</div>
<div class="c" style="left:466px;top:454px;width:68px;height:17px;line-height:17px;color:#333">盘口</div>
<div class="c" style="left:535px;top:454px;width:42px;height:17px;line-height:17px;color:#333">客</div>
<div class="c" style="left:578px;top:454px;width:62px;height:17px;line-height:17px;color:#333">主</div>
<div class="c" style="left:641px;top:454px;width:64px;height:17px;line-height:17px;color:#333">和</div>
<div class="c" style="left:706px;top:454px;width:64px;height:17px;line-height:17px;color:#333">客</div>
<div class="c" style="left:771px;top:454px;width:38px;height:17px;line-height:17px;color:#333">胜负</div>
<div class="c" style="left:810px;top:454px;width:39px;height:17px;line-height:17px;color:#333">让球</div>
<div class="c" style="left:850px;top:454px;width:57px;height:17px;line-height:17px;color:#333">进球数</div>
<div class="c" style="left:-1px;top:472px;width:39px;height:27px;line-height:27px;color:#fff">意甲</div>
<div class="c" style="left:39px;top:472px;width:76px;height:27px;line-height:27px;color:#000"><span class="n">26-03-22</span></div>
<div class="c" style="left:115px;top:472px;width:105px;height:27px;line-height:27px;color:#000">AC米兰</div>
<div class="c" style="left:222px;top:472px;width:88px;height:27px;line-height:27px;color:#000"><span class="n"><span style="color:#ff0000">3-2</span>(1-1)</span></div>
<div class="c" style="left:311px;top:472px;width:39px;height:27px;line-height:27px;color:#000"><span class="n">4-6</span></div>
<div class="c" style="left:350px;top:472px;width:73px;height:27px;line-height:27px;color:#000"><span style="color:#008000;-webkit-text-stroke:0.15px #008000">都灵</span></div>
<div class="c" style="left:425px;top:472px;width:41px;height:27px;line-height:27px;color:#000"><span class="n">0.84</span></div>
<div class="c" style="left:466px;top:472px;width:68px;height:27px;line-height:27px;color:#000">一/球半</div>
<div class="c" style="left:536px;top:472px;width:42px;height:27px;line-height:27px;color:#000"><span class="n">1.04</span></div>
<div class="c" style="left:579px;top:472px;width:62px;height:27px;line-height:27px;color:#000"><span class="n">1.36</span></div>
<div class="c" style="left:642px;top:472px;width:64px;height:27px;line-height:27px;color:#000"><span class="n">4.88</span></div>
<div class="c" style="left:707px;top:472px;width:64px;height:27px;line-height:27px;color:#000"><span class="n">8.93</span></div>
<div class="c" style="left:771px;top:472px;width:38px;height:27px;line-height:27px;color:#000"><span style="color:#008000;-webkit-text-stroke:0.25px #008000">負</span></div>
<div class="c" style="left:810px;top:472px;width:39px;height:27px;line-height:27px;color:#000"><span style="color:#ff0000;-webkit-text-stroke:0.25px #ff0000">贏</span></div>
<div class="c" style="left:850px;top:472px;width:57px;height:27px;line-height:27px;color:#000"><span style="color:#ff0000;-webkit-text-stroke:0.25px #ff0000">大</span></div>
<div class="c" style="left:-1px;top:500px;width:39px;height:27px;line-height:27px;color:#fff">意甲</div>
<div class="c" style="left:39px;top:500px;width:76px;height:27px;line-height:27px;color:#000"><span class="n">26-03-14</span></div>
<div class="c" style="left:115px;top:500px;width:105px;height:27px;line-height:27px;color:#000"><span style="color:#008000;-webkit-text-stroke:0.15px #008000">都灵</span></div>
<div class="c" style="left:222px;top:500px;width:88px;height:27px;line-height:27px;color:#000"><span class="n"><span style="color:#ff0000">4-1</span>(1-1)</span></div>
<div class="c" style="left:311px;top:500px;width:39px;height:27px;line-height:27px;color:#000"><span class="n">2-7</span></div>
<div class="c" style="left:350px;top:500px;width:73px;height:27px;line-height:27px;color:#000">帕尔马</div>
<div class="c" style="left:425px;top:500px;width:41px;height:27px;line-height:27px;color:#000"><span class="n">0.92</span></div>
<div class="c" style="left:466px;top:500px;width:68px;height:27px;line-height:27px;color:#000">平/半</div>
<div class="c" style="left:536px;top:500px;width:42px;height:27px;line-height:27px;color:#000"><span class="n">0.96</span></div>
<div class="c" style="left:579px;top:500px;width:62px;height:27px;line-height:27px;color:#000"><span class="n">2.24</span></div>
<div class="c" style="left:642px;top:500px;width:64px;height:27px;line-height:27px;color:#000"><span class="n">2.97</span></div>
<div class="c" style="left:707px;top:500px;width:64px;height:27px;line-height:27px;color:#000"><span class="n">3.75</span></div>
<div class="c" style="left:771px;top:500px;width:38px;height:27px;line-height:27px;color:#000"><span style="color:#ff0000;-webkit-text-stroke:0.25px #ff0000">勝</span></div>
<div class="c" style="left:810px;top:500px;width:39px;height:27px;line-height:27px;color:#000"><span style="color:#ff0000;-webkit-text-stroke:0.25px #ff0000">贏</span></div>
<div class="c" style="left:850px;top:500px;width:57px;height:27px;line-height:27px;color:#000"><span style="color:#ff0000;-webkit-text-stroke:0.25px #ff0000">大</span></div>
<div class="c" style="left:-1px;top:528px;width:39px;height:27px;line-height:27px;color:#fff">意甲</div>
<div class="c" style="left:39px;top:528px;width:76px;height:27px;line-height:27px;color:#000"><span class="n">26-03-07</span></div>
<div class="c" style="left:115px;top:528px;width:105px;height:27px;line-height:27px;color:#000">那不勒斯</div>
<div class="c" style="left:222px;top:528px;width:88px;height:27px;line-height:27px;color:#000"><span class="n"><span style="color:#ff0000">2-1</span>(1-0)</span></div>
<div class="c" style="left:311px;top:528px;width:39px;height:27px;line-height:27px;color:#000"><span class="n">11-2</span></div>
<div class="c" style="left:350px;top:528px;width:73px;height:27px;line-height:27px;color:#000"><span style="color:#008000;-webkit-text-stroke:0.15px #008000">都灵</span></div>
<div class="c" style="left:425px;top:528px;width:41px;height:27px;line-height:27px;color:#000"><span class="n">1.04</span></div>
<div class="c" style="left:466px;top:528px;width:68px;height:27px;line-height:27px;color:#000">一球</div>
<div class="c" style="left:536px;top:528px;width:42px;height:27px;line-height:27px;color:#000"><span class="n">0.84</span></div>
<div class="c" style="left:579px;top:528px;width:62px;height:27px;line-height:27px;color:#000"><span class="n">1.55</span></div>
<div class="c" style="left:642px;top:528px;width:64px;height:27px;line-height:27px;color:#000"><span class="n">3.89</span></div>
<div class="c" style="left:707px;top:528px;width:64px;height:27px;line-height:27px;color:#000"><span class="n">6.65</span></div>
<div class="c" style="left:771px;top:528px;width:38px;height:27px;line-height:27px;color:#000"><span style="color:#008000;-webkit-text-stroke:0.25px #008000">負</span></div>
<div class="c" style="left:810px;top:528px;width:39px;height:27px;line-height:27px;color:#000"><span style="color:#0000ff;-webkit-text-stroke:0.25px #0000ff">走</span></div>
<div class="c" style="left:850px;top:528px;width:57px;height:27px;line-height:27px;color:#000"><span style="color:#ff0000;-webkit-text-stroke:0.25px #ff0000">大</span></div>
<div class="c" style="left:-1px;top:556px;width:39px;height:27px;line-height:27px;color:#fff">意甲</div>
<div class="c" style="left:39px;top:556px;width:76px;height:27px;line-height:27px;color:#000"><span class="n">26-03-02</span></div>
<div class="c" style="left:115px;top:556px;width:105px;height:27px;line-height:27px;color:#000"><span style="color:#008000;-webkit-text-stroke:0.15px #008000">都灵</span></div>
<div class="c" style="left:222px;top:556px;width:88px;height:27px;line-height:27px;color:#000"><span class="n"><span style="color:#ff0000">2-0</span>(1-0)</span></div>
<div class="c" style="left:311px;top:556px;width:39px;height:27px;line-height:27px;color:#000"><span class="n">6-9</span></div>
<div class="c" style="left:350px;top:556px;width:73px;height:27px;line-height:27px;color:#000">拉齐奥</div>
<div class="c" style="left:425px;top:556px;width:41px;height:27px;line-height:27px;color:#000"><span class="n">0.95</span></div>
<div class="c" style="left:466px;top:556px;width:68px;height:27px;line-height:27px;color:#000">平手</div>
<div class="c" style="left:536px;top:556px;width:42px;height:27px;line-height:27px;color:#000"><span class="n">0.93</span></div>
<div class="c" style="left:579px;top:556px;width:62px;height:27px;line-height:27px;color:#000"><span class="n">2.85</span></div>
<div class="c" style="left:642px;top:556px;width:64px;height:27px;line-height:27px;color:#000"><span class="n">2.83</span></div>
<div class="c" style="left:707px;top:556px;width:64px;height:27px;line-height:27px;color:#000"><span class="n">2.87</span></div>
<div class="c" style="left:771px;top:556px;width:38px;height:27px;line-height:27px;color:#000"><span style="color:#ff0000;-webkit-text-stroke:0.25px #ff0000">勝</span></div>
<div class="c" style="left:810px;top:556px;width:39px;height:27px;line-height:27px;color:#000"><span style="color:#ff0000;-webkit-text-stroke:0.25px #ff0000">贏</span></div>
<div class="c" style="left:850px;top:556px;width:57px;height:27px;line-height:27px;color:#000"><span style="color:#0000ff;-webkit-text-stroke:0.25px #0000ff">走</span></div>
<div class="c" style="left:-1px;top:584px;width:39px;height:27px;line-height:27px;color:#fff">意甲</div>
<div class="c" style="left:39px;top:584px;width:76px;height:27px;line-height:27px;color:#000"><span class="n">26-02-22</span></div>
<div class="c" style="left:115px;top:584px;width:105px;height:27px;line-height:27px;color:#000">热那亚</div>
<div class="c" style="left:222px;top:584px;width:88px;height:27px;line-height:27px;color:#000"><span class="n"><span style="color:#ff0000">3-0</span>(2-0)</span></div>
<div class="c" style="left:311px;top:584px;width:39px;height:27px;line-height:27px;color:#000"><span class="n">1-3</span></div>
<div class="c" style="left:350px;top:584px;width:73px;height:27px;line-height:27px;color:#000"><span style="color:#008000;-webkit-text-stroke:0.15px #008000">都灵</span><span class="rc">1</span></div>
<div class="c" style="left:425px;top:584px;width:41px;height:27px;line-height:27px;color:#000"><span class="n">0.95</span></div>
<div class="c" style="left:466px;top:584px;width:68px;height:27px;line-height:27px;color:#000">平/半</div>
<div class="c" style="left:536px;top:584px;width:42px;height:27px;line-height:27px;color:#000"><span class="n">0.93</span></div>
<div class="c" style="left:579px;top:584px;width:62px;height:27px;line-height:27px;color:#000"><span class="n">2.31</span></div>
<div class="c" style="left:642px;top:584px;width:64px;height:27px;line-height:27px;color:#000"><span class="n">2.95</span></div>
<div class="c" style="left:707px;top:584px;width:64px;height:27px;line-height:27px;color:#000"><span class="n">3.57</span></div>
<div class="c" style="left:771px;top:584px;width:38px;height:27px;line-height:27px;color:#000"><span style="color:#008000;-webkit-text-stroke:0.25px #008000">負</span></div>
<div class="c" style="left:810px;top:584px;width:39px;height:27px;line-height:27px;color:#000"><span style="color:#008000;-webkit-text-stroke:0.25px #008000">輸</span></div>
<div class="c" style="left:850px;top:584px;width:57px;height:27px;line-height:27px;color:#000"><span style="color:#ff0000;-webkit-text-stroke:0.25px #ff0000">大</span></div>
<div class="c" style="left:-1px;top:612px;width:39px;height:27px;line-height:27px;color:#fff">意甲</div>
<div class="c" style="left:39px;top:612px;width:76px;height:27px;line-height:27px;color:#000"><span class="n">26-02-16</span></div>
<div class="c" style="left:115px;top:612px;width:105px;height:27px;line-height:27px;color:#000"><span style="color:#008000;-webkit-text-stroke:0.15px #008000">都灵</span></div>
<div class="c" style="left:222px;top:612px;width:88px;height:27px;line-height:27px;color:#000"><span class="n"><span style="color:#ff0000">1-2</span>(0-0)</span></div>
<div class="c" style="left:311px;top:612px;width:39px;height:27px;line-height:27px;color:#000"><span class="n">4-2</span></div>
<div class="c" style="left:350px;top:612px;width:73px;height:27px;line-height:27px;color:#000">博洛尼亚</div>
<div class="c" style="left:425px;top:612px;width:41px;height:27px;line-height:27px;color:#000"><span class="n">0.77</span></div>
<div class="c" style="left:466px;top:612px;width:68px;height:27px;line-height:27px;color:#000"><span style="color:#ff0000">*</span>平/半</div>
<div class="c" style="left:536px;top:612px;width:42px;height:27px;line-height:27px;color:#000"><span class="n">1.12</span></div>
<div class="c" style="left:579px;top:612px;width:62px;height:27px;line-height:27px;color:#000"><span class="n">3.04</span></div>
<div class="c" style="left:642px;top:612px;width:64px;height:27px;line-height:27px;color:#000"><span class="n">3.14</span></div>
<div class="c" style="left:707px;top:612px;width:64px;height:27px;line-height:27px;color:#000"><span class="n">2.47</span></div>
<div class="c" style="left:771px;top:612px;width:38px;height:27px;line-height:27px;color:#000"><span style="color:#008000;-webkit-text-stroke:0.25px #008000">負</span></div>
<div class="c" style="left:810px;top:612px;width:39px;height:27px;line-height:27px;color:#000"><span style="color:#008000;-webkit-text-stroke:0.25px #008000">輸</span></div>
<div class="c" style="left:850px;top:612px;width:57px;height:27px;line-height:27px;color:#000"><span style="color:#ff0000;-webkit-text-stroke:0.25px #ff0000">大</span></div>
<div class="c" style="left:-1px;top:640px;width:39px;height:27px;line-height:27px;color:#fff">意甲</div>
<div class="c" style="left:39px;top:640px;width:76px;height:27px;line-height:27px;color:#000"><span class="n">26-02-08</span></div>
<div class="c" style="left:115px;top:640px;width:105px;height:27px;line-height:27px;color:#000">佛罗伦萨</div>
<div class="c" style="left:222px;top:640px;width:88px;height:27px;line-height:27px;color:#000"><span class="n"><span style="color:#ff0000">2-2</span>(0-1)</span></div>
<div class="c" style="left:311px;top:640px;width:39px;height:27px;line-height:27px;color:#000"><span class="n">9-4</span></div>
<div class="c" style="left:350px;top:640px;width:73px;height:27px;line-height:27px;color:#000"><span style="color:#008000;-webkit-text-stroke:0.15px #008000">都灵</span></div>
<div class="c" style="left:425px;top:640px;width:41px;height:27px;line-height:27px;color:#000"><span class="n">0.90</span></div>
<div class="c" style="left:466px;top:640px;width:68px;height:27px;line-height:27px;color:#000">半/一</div>
<div class="c" style="left:536px;top:640px;width:42px;height:27px;line-height:27px;color:#000"><span class="n">0.98</span></div>
<div class="c" style="left:579px;top:640px;width:62px;height:27px;line-height:27px;color:#000"><span class="n">1.68</span></div>
<div class="c" style="left:642px;top:640px;width:64px;height:27px;line-height:27px;color:#000"><span class="n">3.80</span></div>
<div class="c" style="left:707px;top:640px;width:64px;height:27px;line-height:27px;color:#000"><span class="n">5.14</span></div>
<div class="c" style="left:771px;top:640px;width:38px;height:27px;line-height:27px;color:#000"><span style="color:#0000ff;-webkit-text-stroke:0.25px #0000ff">平</span></div>
<div class="c" style="left:810px;top:640px;width:39px;height:27px;line-height:27px;color:#000"><span style="color:#ff0000;-webkit-text-stroke:0.25px #ff0000">贏</span></div>
<div class="c" style="left:850px;top:640px;width:57px;height:27px;line-height:27px;color:#000"><span style="color:#ff0000;-webkit-text-stroke:0.25px #ff0000">大</span></div>
<div class="c" style="left:-1px;top:668px;width:39px;height:27px;line-height:27px;color:#fff">意杯</div>
<div class="c" style="left:39px;top:668px;width:76px;height:27px;line-height:27px;color:#000"><span class="n">26-02-05</span></div>
<div class="c" style="left:115px;top:668px;width:105px;height:27px;line-height:27px;color:#000">国际米兰(中)</div>
<div class="c" style="left:222px;top:668px;width:88px;height:27px;line-height:27px;color:#000"><span class="n"><span style="color:#ff0000">2-1</span>(1-0)</span></div>
<div class="c" style="left:311px;top:668px;width:39px;height:27px;line-height:27px;color:#000"><span class="n">2-2</span></div>
<div class="c" style="left:350px;top:668px;width:73px;height:27px;line-height:27px;color:#000"><span style="color:#008000;-webkit-text-stroke:0.15px #008000">都灵</span></div>
<div class="c" style="left:425px;top:668px;width:41px;height:27px;line-height:27px;color:#000"><span class="n">0.93</span></div>
<div class="c" style="left:466px;top:668px;width:68px;height:27px;line-height:27px;color:#000">一/球半</div>
<div class="c" style="left:536px;top:668px;width:42px;height:27px;line-height:27px;color:#000"><span class="n">0.95</span></div>
<div class="c" style="left:579px;top:668px;width:62px;height:27px;line-height:27px;color:#000"><span class="n">1.36</span></div>
<div class="c" style="left:642px;top:668px;width:64px;height:27px;line-height:27px;color:#000"><span class="n">5.08</span></div>
<div class="c" style="left:707px;top:668px;width:64px;height:27px;line-height:27px;color:#000"><span class="n">8.03</span></div>
<div class="c" style="left:771px;top:668px;width:38px;height:27px;line-height:27px;color:#000"><span style="color:#008000;-webkit-text-stroke:0.25px #008000">負</span></div>
<div class="c" style="left:810px;top:668px;width:39px;height:27px;line-height:27px;color:#000"><span style="color:#ff0000;-webkit-text-stroke:0.25px #ff0000">贏</span></div>
<div class="c" style="left:850px;top:668px;width:57px;height:27px;line-height:27px;color:#000"><span style="color:#ff0000;-webkit-text-stroke:0.25px #ff0000">大</span></div>
<div class="c" style="left:-1px;top:696px;width:39px;height:27px;line-height:27px;color:#fff">意甲</div>
<div class="c" style="left:39px;top:696px;width:76px;height:27px;line-height:27px;color:#000"><span class="n">26-02-01</span></div>
<div class="c" style="left:115px;top:696px;width:105px;height:27px;line-height:27px;color:#000"><span style="color:#008000;-webkit-text-stroke:0.15px #008000">都灵</span></div>
<div class="c" style="left:222px;top:696px;width:88px;height:27px;line-height:27px;color:#000"><span class="n"><span style="color:#ff0000">1-0</span>(1-0)</span></div>
<div class="c" style="left:311px;top:696px;width:39px;height:27px;line-height:27px;color:#000"><span class="n">3-8</span></div>
<div class="c" style="left:350px;top:696px;width:73px;height:27px;line-height:27px;color:#000">莱切</div>
<div class="c" style="left:425px;top:696px;width:41px;height:27px;line-height:27px;color:#000"><span class="n">0.83</span></div>
<div class="c" style="left:466px;top:696px;width:68px;height:27px;line-height:27px;color:#000">平/半</div>
<div class="c" style="left:536px;top:696px;width:42px;height:27px;line-height:27px;color:#000"><span class="n">1.05</span></div>
<div class="c" style="left:579px;top:696px;width:62px;height:27px;line-height:27px;color:#000"><span class="n">2.13</span></div>
<div class="c" style="left:642px;top:696px;width:64px;height:27px;line-height:27px;color:#000"><span class="n">2.92</span></div>
<div class="c" style="left:707px;top:696px;width:64px;height:27px;line-height:27px;color:#000"><span class="n">4.15</span></div>
<div class="c" style="left:771px;top:696px;width:38px;height:27px;line-height:27px;color:#000"><span style="color:#ff0000;-webkit-text-stroke:0.25px #ff0000">勝</span></div>
<div class="c" style="left:810px;top:696px;width:39px;height:27px;line-height:27px;color:#000"><span style="color:#ff0000;-webkit-text-stroke:0.25px #ff0000">贏</span></div>
<div class="c" style="left:850px;top:696px;width:57px;height:27px;line-height:27px;color:#000"><span style="color:#008000;-webkit-text-stroke:0.25px #008000">小</span></div>
<div class="c" style="left:-1px;top:724px;width:39px;height:27px;line-height:27px;color:#fff">意甲</div>
<div class="c" style="left:39px;top:724px;width:76px;height:27px;line-height:27px;color:#000"><span class="n">26-01-24</span></div>
<div class="c" style="left:115px;top:724px;width:105px;height:27px;line-height:27px;color:#000">科木</div>
<div class="c" style="left:222px;top:724px;width:88px;height:27px;line-height:27px;color:#000"><span class="n"><span style="color:#ff0000">6-0</span>(2-0)</span></div>
<div class="c" style="left:311px;top:724px;width:39px;height:27px;line-height:27px;color:#000"><span class="n">2-1</span></div>
<div class="c" style="left:350px;top:724px;width:73px;height:27px;line-height:27px;color:#000"><span style="color:#008000;-webkit-text-stroke:0.15px #008000">都灵</span></div>
<div class="c" style="left:425px;top:724px;width:41px;height:27px;line-height:27px;color:#000"><span class="n">0.92</span></div>
<div class="c" style="left:466px;top:724px;width:68px;height:27px;line-height:27px;color:#000">一球</div>
<div class="c" style="left:536px;top:724px;width:42px;height:27px;line-height:27px;color:#000"><span class="n">0.96</span></div>
<div class="c" style="left:579px;top:724px;width:62px;height:27px;line-height:27px;color:#000"><span class="n">1.55</span></div>
<div class="c" style="left:642px;top:724px;width:64px;height:27px;line-height:27px;color:#000"><span class="n">3.95</span></div>
<div class="c" style="left:707px;top:724px;width:64px;height:27px;line-height:27px;color:#000"><span class="n">6.44</span></div>
<div class="c" style="left:771px;top:724px;width:38px;height:27px;line-height:27px;color:#000"><span style="color:#008000;-webkit-text-stroke:0.25px #008000">負</span></div>
<div class="c" style="left:810px;top:724px;width:39px;height:27px;line-height:27px;color:#000"><span style="color:#008000;-webkit-text-stroke:0.25px #008000">輸</span></div>
<div class="c" style="left:850px;top:724px;width:57px;height:27px;line-height:27px;color:#000"><span style="color:#ff0000;-webkit-text-stroke:0.25px #ff0000">大</span></div>
<div class="t" style="left:351px;top:413px;line-height:14px;color:#111">近</div>
<div class="sel" style="left:367px;top:411px;width:35px;height:16px"></div>
<div class="t" style="left:372px;top:413px;line-height:14px;color:#000;font-size:11px"><span class="tah">10</span></div>
<svg style="position:absolute;left:390px;top:417px" width="6" height="5"><path d="M0 0 L6 0 L3 5 Z" fill="#000"/></svg>
<div class="t" style="left:406px;top:413px;line-height:14px;color:#111">场</div>
<div class="cb" style="left:423px;top:414px"></div>
<div class="t" style="left:440px;top:413px;line-height:14px;color:#111">同客</div>
<div class="cb" style="left:468px;top:414px"><svg width="12" height="12" style="position:absolute;left:-1px;top:-1px"><path d="M2.6 6.6 L4.8 9 L9.4 2.9" fill="none" stroke="#404040" stroke-width="2.7" stroke-linejoin="miter" stroke-linecap="butt"/></svg></div>
<div class="t" style="left:480px;top:413px;line-height:14px;color:#111">意甲</div>
<div class="cb" style="left:505px;top:414px"><svg width="12" height="12" style="position:absolute;left:-1px;top:-1px"><path d="M2.6 6.6 L4.8 9 L9.4 2.9" fill="none" stroke="#404040" stroke-width="2.7" stroke-linejoin="miter" stroke-linecap="butt"/></svg></div>
<div class="t" style="left:517px;top:413px;line-height:14px;color:#111">意杯</div>
<div class="cb" style="left:543px;top:414px"><svg width="12" height="12" style="position:absolute;left:-1px;top:-1px"><path d="M2.6 6.6 L4.8 9 L9.4 2.9" fill="none" stroke="#404040" stroke-width="2.7" stroke-linejoin="miter" stroke-linecap="butt"/></svg></div>
<div class="t" style="left:554px;top:413px;line-height:14px;color:#111">球会友谊</div>
<div class="sel" style="left:451px;top:431px;width:59px;height:20px"></div>
<div class="t" style="left:456px;top:433px;line-height:18px;color:#000;font-size:13px">Crow*</div>
<svg style="position:absolute;left:497px;top:439px" width="7" height="6"><path d="M0 0 L7 0 L3.5 6 Z" fill="#000"/></svg>
<div class="sel" style="left:517px;top:431px;width:36px;height:20px"></div>
<div class="t" style="left:522px;top:433px;line-height:18px;color:#000;font-size:12px">终</div>
<svg style="position:absolute;left:540px;top:439px" width="7" height="6"><path d="M0 0 L7 0 L3.5 6 Z" fill="#000"/></svg>
<div class="sel" style="left:611px;top:431px;width:83px;height:20px"></div>
<div class="t" style="left:615px;top:433px;line-height:18px;color:#000;font-size:12px">胜平负均值</div>
<svg style="position:absolute;left:682px;top:439px" width="7" height="6"><path d="M0 0 L7 0 L3.5 6 Z" fill="#000"/></svg>
<div class="sel" style="left:703px;top:431px;width:35px;height:20px"></div>
<div class="t" style="left:707px;top:433px;line-height:18px;color:#000;font-size:12px">终</div>
<svg style="position:absolute;left:726px;top:439px" width="7" height="6"><path d="M0 0 L7 0 L3.5 6 Z" fill="#000"/></svg>
<div class="sel" style="left:817px;top:431px;width:47px;height:20px"></div>
<div class="t" style="left:821px;top:433px;line-height:18px;color:#000;font-size:12px">全场</div>
<svg style="position:absolute;left:852px;top:439px" width="7" height="6"><path d="M0 0 L7 0 L3.5 6 Z" fill="#000"/></svg>
</body></html>
